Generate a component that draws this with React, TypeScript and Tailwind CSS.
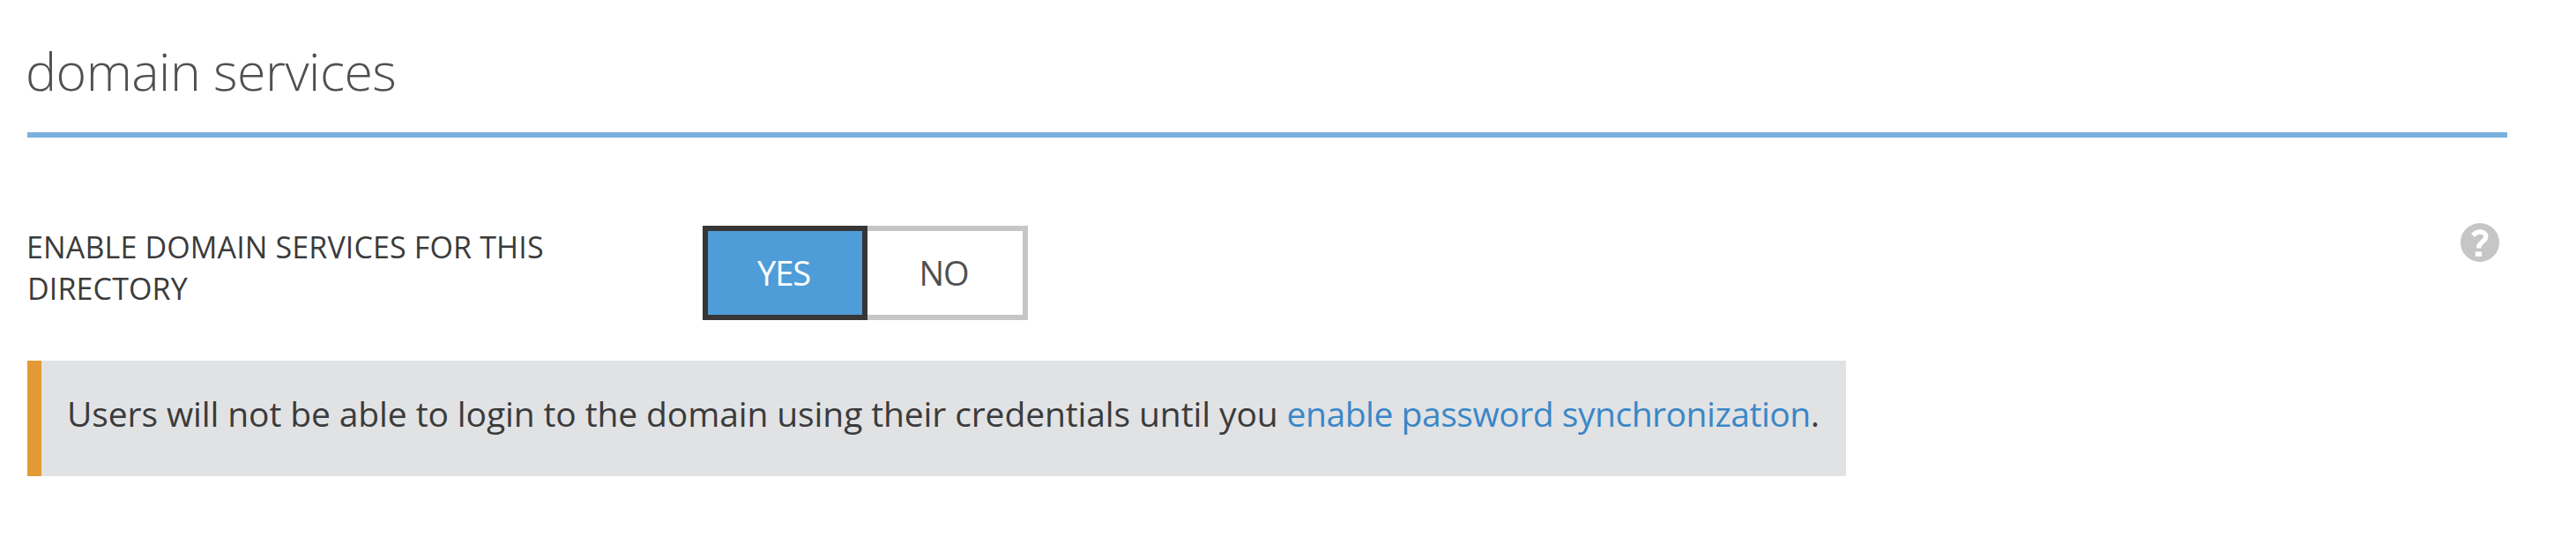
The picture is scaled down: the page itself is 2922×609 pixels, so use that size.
const options = [
  { label: "YES", selected: true },
  { label: "NO", selected: false },
];

function HelpIcon() {
  return (
    <svg viewBox="0 0 44 44" className="h-11 w-11" aria-hidden="true">
      <circle cx="22" cy="22" r="22" fill="#c6c6c6" />
      <path
        d="M14 14C16.5 11.2 19.2 10 22 10c4.6 0 6.8 2.2 6.8 5.2 0 5.8-8.3 6-8.3 13.3"
        fill="none"
        stroke="#fff"
        strokeWidth="5.4"
      />
      <rect x="16.8" y="32.4" width="7.4" height="5.4" fill="#fff" />
    </svg>
  );
}

export default function App() {
  return (
    <main className="h-[609px] w-[2922px] bg-white pl-[31px] pr-[78px] pt-[38px] font-['Open_Sans','Noto_Sans',sans-serif] text-[#3b3b3b]">
      <h1 className="h-[118px] border-b-6 border-[#78b0e0] indent-[-2px] text-[59px] leading-[84px] font-light tracking-[-0.5px] whitespace-nowrap text-[#505050]">
        domain services
      </h1>

      <div className="flex h-[253px] items-start pt-[100px]">
        <div className="w-[766px] pt-px indent-[-1px] text-[34px] leading-[47px] tracking-[0.14px] whitespace-nowrap">
          ENABLE DOMAIN SERVICES FOR THIS
          <br />
          DIRECTORY
        </div>

        <div className="flex h-[107px] w-[369px]">
          {options.map((option) => (
            <button
              key={option.label}
              className={
                option.selected
                  ? "w-[187px] border-6 border-[#363636] bg-[#4f9dd8] pr-[3px] text-[38px] tracking-[-1px] text-white"
                  : "flex-1 border-6 border-l-0 border-[#c6c6c6] bg-white pr-[3px] text-[38px] tracking-[-1px] text-[#505050]"
              }
            >
              {option.label}
            </button>
          ))}
        </div>

        <button className="mr-[9px] -mt-[3px] ml-auto" aria-label="Help">
          <HelpIcon />
        </button>
      </div>

      <div className="h-[131px] w-[2063px] border-l-16 border-[#e39a35] bg-[#e1e2e4] pt-[33px] pl-[29px] text-[39px] leading-[54px] tracking-[-0.11px] whitespace-nowrap">
        Users will not be able to login to the domain using their credentials until you{" "}
        <a href="#" className="tracking-[-0.46px] text-[#3a87c7]">
          enable password synchronization
        </a>
        .
      </div>
    </main>
  );
}
